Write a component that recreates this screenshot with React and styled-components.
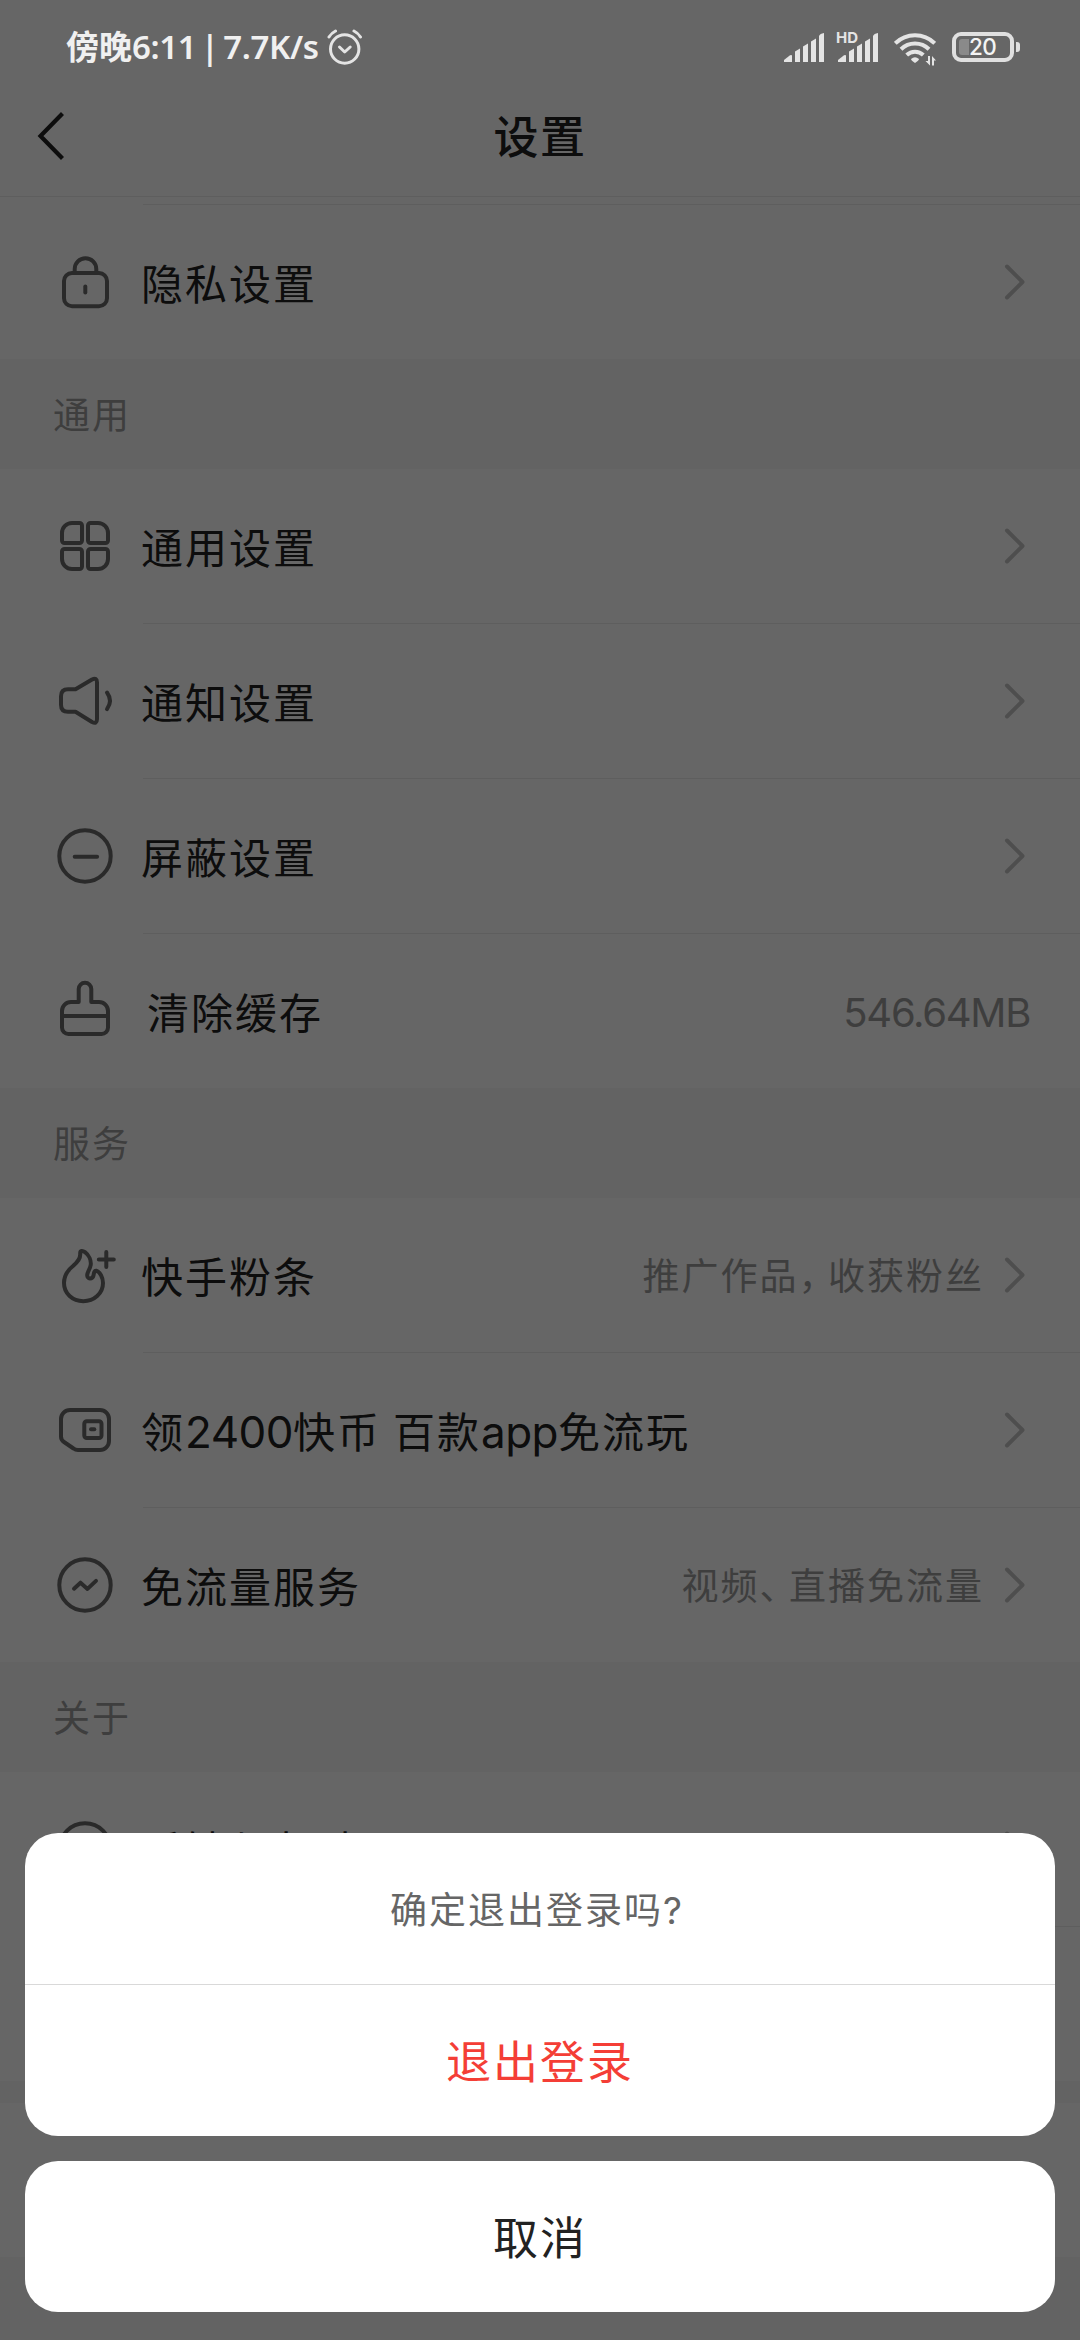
import React from 'react'
import styled, { createGlobalStyle } from 'styled-components'

const GlobalStyle = createGlobalStyle`
    * {
        box-sizing: border-box;
    }

    body {
        margin: 0;
        background: #ffffff;
        font-family: Inter, "Noto Sans CJK SC", sans-serif;
    }
`

const Screen = styled.div`
    position: relative;
    width: 1080px;
    height: 2340px;
    overflow: hidden;
    background: #ffffff;
`

/* settings page */

const Header = styled.header`
    display: grid;
    grid-template-columns: 120px 1fr 120px;
    align-items: center;
    height: 197px;
    padding-top: 76px;
    border-bottom: 1px solid #ececec;
`

const BackButton = styled.button`
    display: flex;
    padding: 0 0 0 36px;
    border: 0;
    background: none;
`

const Title = styled.h1`
    margin: 0;
    padding-top: 4px;
    font-size: 45px;
    line-height: 60px;
    font-weight: 500;
    letter-spacing: 1.5px;
    text-align: center;
    color: #222222;
`

const List = styled.ul`
    margin: 0;
    padding: 0;
    list-style: none;
`

const ScrolledRow = styled.div`
    height: 8px;
    margin-left: 143px;
    border-bottom: 1px solid #ececec;
`

const Row = styled.li`
    display: flex;
    align-items: center;
    height: 154px;
    padding: 0 52px;

    svg {
        flex: none;
    }
`

const Divider = styled.li`
    height: 1px;
    margin-left: 143px;
    background: #ececec;
`

const Label = styled.span`
    flex: 1;
    margin-left: ${(props) => (props.$wide ? 29 : 23)}px;
    padding-top: 5px;
    font-size: 42px;
    line-height: 60px;
    letter-spacing: 2px;
    word-spacing: -2px;
    color: #222222;
    white-space: nowrap;
`

const Latin = styled.span`
    font-size: 44px;
    letter-spacing: -0.5px;
`

const Note = styled.span`
    margin-right: ${(props) => (props.$last ? -2 : 18)}px;
    padding-top: 4px;
    font-size: ${(props) => (props.$last ? 40 : 37)}px;
    line-height: 56px;
    letter-spacing: ${(props) => (props.$last ? -1.3 : 2)}px;
    color: #9c9c9c;
    white-space: nowrap;
`

const Comma = styled.span`
    letter-spacing: -7.5px;
`

const SectionTitle = styled.h2`
    display: flex;
    align-items: center;
    height: 110px;
    margin: 0;
    padding: 0 0 2px 53px;
    background: #f8f8f8;
    font-size: 37px;
    font-weight: 400;
    letter-spacing: 2px;
    color: #9c9c9c;
`

const Gap = styled.div`
    height: ${(props) => props.$height}px;
    background: #f8f8f8;
`

/* dimmed layer and the sheet over it */

const Overlay = styled.div`
    position: absolute;
    inset: 0;
    display: flex;
    flex-direction: column;
    justify-content: space-between;
    background: rgba(0, 0, 0, 0.6);
`

const StatusBar = styled.div`
    display: flex;
    align-items: center;
    justify-content: space-between;
    height: 94px;
    padding: 0 60px 0 66px;
    color: #e4e4e4;
`

const StatusSide = styled.div`
    display: flex;
    align-items: center;
`

const Clock = styled.span`
    width: 261px;
    font-family: "Noto Sans", "Noto Sans CJK SC", sans-serif;
    font-size: 33px;
    line-height: 44px;
    font-weight: 600;
    color: #f0f0f0;
    white-space: nowrap;
`

const Digits = styled.span`
    letter-spacing: -0.4px;
    word-spacing: -3.5px;
`

const Sheet = styled.div`
    display: flex;
    flex-direction: column;
    gap: 25px;
    padding: 0 25px 28px;
`

const Card = styled.div`
    border-radius: 33px;
    background: #ffffff;
    overflow: hidden;
`

const Prompt = styled.p`
    margin: 0;
    padding: 4px 6px 0 0;
    height: 152px;
    border-bottom: 1px solid #d9d9d9;
    font-size: 37px;
    line-height: 147px;
    letter-spacing: 2px;
    text-align: center;
    color: #666666;
`

const SheetButton = styled.button`
    display: block;
    width: 100%;
    height: 151px;
    padding: 4px 0 0;
    border: 0;
    background: none;
    font-family: inherit;
    font-size: 45px;
    line-height: 147px;
    letter-spacing: 2px;
    color: ${(props) => (props.$danger ? '#f43e36' : '#222222')};
`

function RowIcon({ children }) {
    return (
        <svg width="66" height="66" viewBox="0 0 66 66" fill="none" stroke="#6a6a6a" strokeWidth="4" strokeLinecap="round" strokeLinejoin="round">
            {children}
        </svg>
    )
}

const icons = {
    lock: (
        <>
            <rect x="12" y="24" width="43" height="33.3" rx="8" />
            <path d="M22.7 24v-4a10.8 10.8 0 0 1 21.6 0v4" />
            <path d="M33.3 37.6v6" />
        </>
    ),
    grid: (
        <>
            <path d="M20 10h7.5a2.5 2.5 0 0 1 2.5 2.5v15a2.5 2.5 0 0 1-2.5 2.5h-15a2.5 2.5 0 0 1-2.5-2.5v-7.5a10 10 0 0 1 10-10z" />
            <path d="M46 10h-7.5a2.5 2.5 0 0 0-2.5 2.5v15a2.5 2.5 0 0 0 2.5 2.5h15a2.5 2.5 0 0 0 2.5-2.5v-7.5a10 10 0 0 0-10-10z" />
            <path d="M20 56h7.5a2.5 2.5 0 0 0 2.5-2.5v-15a2.5 2.5 0 0 0-2.5-2.5h-15a2.5 2.5 0 0 0-2.5 2.5v7.5a10 10 0 0 0 10 10z" />
            <path d="M46 56h-7.5a2.5 2.5 0 0 1-2.5-2.5v-15a2.5 2.5 0 0 1 2.5-2.5h15a2.5 2.5 0 0 1 2.5 2.5v7.5a10 10 0 0 1-10 10z" />
        </>
    ),
    speaker: (
        <>
            <path d="M16 21.3H23.5L40 11.5Q45 9 45 14.5V51Q45 56.5 40 54L23.5 43.7H16Q9 43.7 9 36.7V28.3Q9 21.3 16 21.3z" />
            <path d="M55 24.5q6 8.3 0 16.6" />
        </>
    ),
    minus: (
        <>
            <circle cx="33" cy="33" r="25.7" />
            <path d="M22.7 33.7h22.4" />
        </>
    ),
    brush: (
        <>
            <path d="M26.7 24V11a6.3 6.3 0 0 1 12.6 0v13h7.7a9 9 0 0 1 9 9v16.5a6.5 6.5 0 0 1-6.5 6.5h-33a6.5 6.5 0 0 1-6.5-6.5v-16.5a9 9 0 0 1 9-9z" />
            <path d="M10 38h46" />
        </>
    ),
    flame: (
        <>
            <path d="M28.2 11.5C28 8.5 30.5 8.3 33 10.2C37 13.2 39.3 18.5 38.7 23C38.1 27 35.5 29.5 35.2 33C35 37.5 40.5 37.5 41.5 33.5C42 30.5 42.3 28.5 44.3 28.8C48 29.8 51 35.5 51 41C51 51.5 42 59.2 31.3 59.2C20.5 59.2 12 51.5 12 41C12 33 16 28 21 24C26 19.5 28.6 16.5 28.2 11.5z" />
            <path d="M46.8 17.4h15M54.3 10v15" />
        </>
    ),
    wallet: (
        <>
            <path d="M18 13h30a9 9 0 0 1 9 9v22a9 9 0 0 1-9 9H26Q23.5 53 21.5 51.5L12 45Q9 43 9 39.5V22a9 9 0 0 1 9-9z" />
            <rect x="32.3" y="24.3" width="17.2" height="16.7" rx="2.5" />
            <path d="M39 32.3h3.3" />
        </>
    ),
    trend: (
        <>
            <circle cx="33" cy="33" r="25.7" />
            <path d="M22 36.7l6.5-6l7 6.2l8.5-8" />
        </>
    ),
    help: <circle cx="33" cy="33" r="25.7" />,
}

function Chevron() {
    return (
        <svg width="26" height="40" viewBox="0 0 26 40" fill="none" stroke="#c4c4c4" strokeWidth="4" strokeLinecap="round" strokeLinejoin="round">
            <path d="M5 4.5L20.5 20L5 35.5" />
        </svg>
    )
}

function Item({ icon, label, note, wide, noArrow, last }) {
    return (
        <>
            <Row>
                <RowIcon>{icons[icon]}</RowIcon>
                <Label $wide={wide}>{label}</Label>
                {note && <Note $last={noArrow}>{note}</Note>}
                {!noArrow && <Chevron />}
            </Row>
            {!last && <Divider />}
        </>
    )
}

function SignalBars() {
    return (
        <svg width="40" height="29" viewBox="0 0 40 29" fill="currentColor">
            <path d="M0 29V27L6 22.3Q8 21.3 8 23V29z" />
            <path d="M11 29V18.5L16 15.5V29z" />
            <path d="M19 29V13.5L24 10.5V29z" />
            <path d="M27 29V8.5L32 5.5V29z" />
            <path d="M35 29V3Q36 .5 40 0V29z" />
        </svg>
    )
}

const HdSignal = styled.div`
    position: relative;
    display: flex;
    margin-left: 14px;
`

const HdMark = styled.span`
    position: absolute;
    left: -2px;
    top: -4px;
    font-size: 15px;
    line-height: 18px;
    font-weight: 700;
`

const Wifi = styled.svg`
    margin: 3px 0 0 16px;
`

const Battery = styled.div`
    display: flex;
    align-items: center;
    width: 62px;
    height: 30px;
    margin-left: 16px;
    padding-left: 3px;
    border: 4px solid #e0e0e0;
    border-radius: 9px;
    font-size: 22.5px;
    line-height: 22px;
    font-weight: 500;
    letter-spacing: -0.5px;
    color: #f4f4f4;

    &::before {
        content: '';
        width: 10px;
        height: 16px;
        border-radius: 3px 0 0 3px;
        background: #8a8a8a;
    }
`

const BatteryTip = styled.div`
    width: 4px;
    height: 10px;
    margin-left: 2px;
    border-radius: 0 3px 3px 0;
    background: #e0e0e0;
`

function Status() {
    return (
        <StatusBar>
            <StatusSide>
                <Clock>傍晚<Digits>6:11 | 7.7K/s</Digits></Clock>
                <svg width="36" height="36" viewBox="0 0 36 36" fill="none" stroke="currentColor" strokeWidth="3" strokeLinecap="round" strokeLinejoin="round">
                    <circle cx="17.7" cy="20" r="14.2" />
                    <path d="M12.5 18l5.2 5l5.5-5" />
                    <path d="M2 8q2.5-4 6.5-6M33.5 8q-2.5-4-6.5-6" />
                </svg>
            </StatusSide>
            <StatusSide>
                <SignalBars />
                <HdSignal>
                    <HdMark>HD</HdMark>
                    <SignalBars />
                </HdSignal>
                <Wifi width="42" height="34" viewBox="0 0 42 34" fill="none" stroke="currentColor" strokeWidth="4">
                    <path d="M1.3 11.3a28 28 0 0 1 39.4 0" />
                    <path d="M7 17.3a20 20 0 0 1 28 0" />
                    <path d="M12.7 23a12 12 0 0 1 16.6 0" />
                    <path d="M17 27q4-3.5 8 0q0 1.5-4 4q-4-2.5-4-4z" fill="currentColor" stroke="none" />
                    <path d="M36 24v9.5l-4.5-4.5h2.5v-5zM38 33.5V24l4 4.5h-2v5z" fill="currentColor" stroke="none" />
                </Wifi>
                <Battery>20</Battery>
                <BatteryTip />
            </StatusSide>
        </StatusBar>
    )
}

function App() {
    return (
        <Screen>
            <GlobalStyle />
            <Header>
                <BackButton>
                    <svg width="30" height="50" viewBox="0 0 30 50" fill="none" stroke="#222222" strokeWidth="4.2">
                        <path d="M26.5 2.5L4.5 25L26.5 47.5" />
                    </svg>
                </BackButton>
                <Title>设置</Title>
            </Header>

            <ScrolledRow />
            <List>
                <Item icon="lock" label="隐私设置" last />
            </List>

            <SectionTitle>通用</SectionTitle>
            <List>
                <Item icon="grid" label="通用设置" />
                <Item icon="speaker" label="通知设置" />
                <Item icon="minus" label="屏蔽设置" />
                <Item icon="brush" label="清除缓存" note="546.64MB" wide noArrow last />
            </List>

            <SectionTitle>服务</SectionTitle>
            <List>
                <Item icon="flame" label="快手粉条" note={<>推广作品<Comma>，</Comma>收获粉丝</>} />
                <Item icon="wallet" label={<>领<Latin>2400</Latin>快币 百款<Latin>app</Latin>免流玩</>} />
                <Item icon="trend" label="免流量服务" note={<>视频<Comma>、</Comma>直播免流量</>} last />
            </List>

            <SectionTitle>关于</SectionTitle>
            <List>
                <Item icon="help" label="反馈与帮助" />
                <Row />
            </List>
            <Gap $height={22} />
            <List>
                <Row />
            </List>
            <Gap $height={83} />

            <Overlay>
                <Status />
                <Sheet>
                    <Card>
                        <Prompt>确定退出登录吗?</Prompt>
                        <SheetButton $danger>退出登录</SheetButton>
                    </Card>
                    <Card>
                        <SheetButton>取消</SheetButton>
                    </Card>
                </Sheet>
            </Overlay>
        </Screen>
    )
}

export default App
